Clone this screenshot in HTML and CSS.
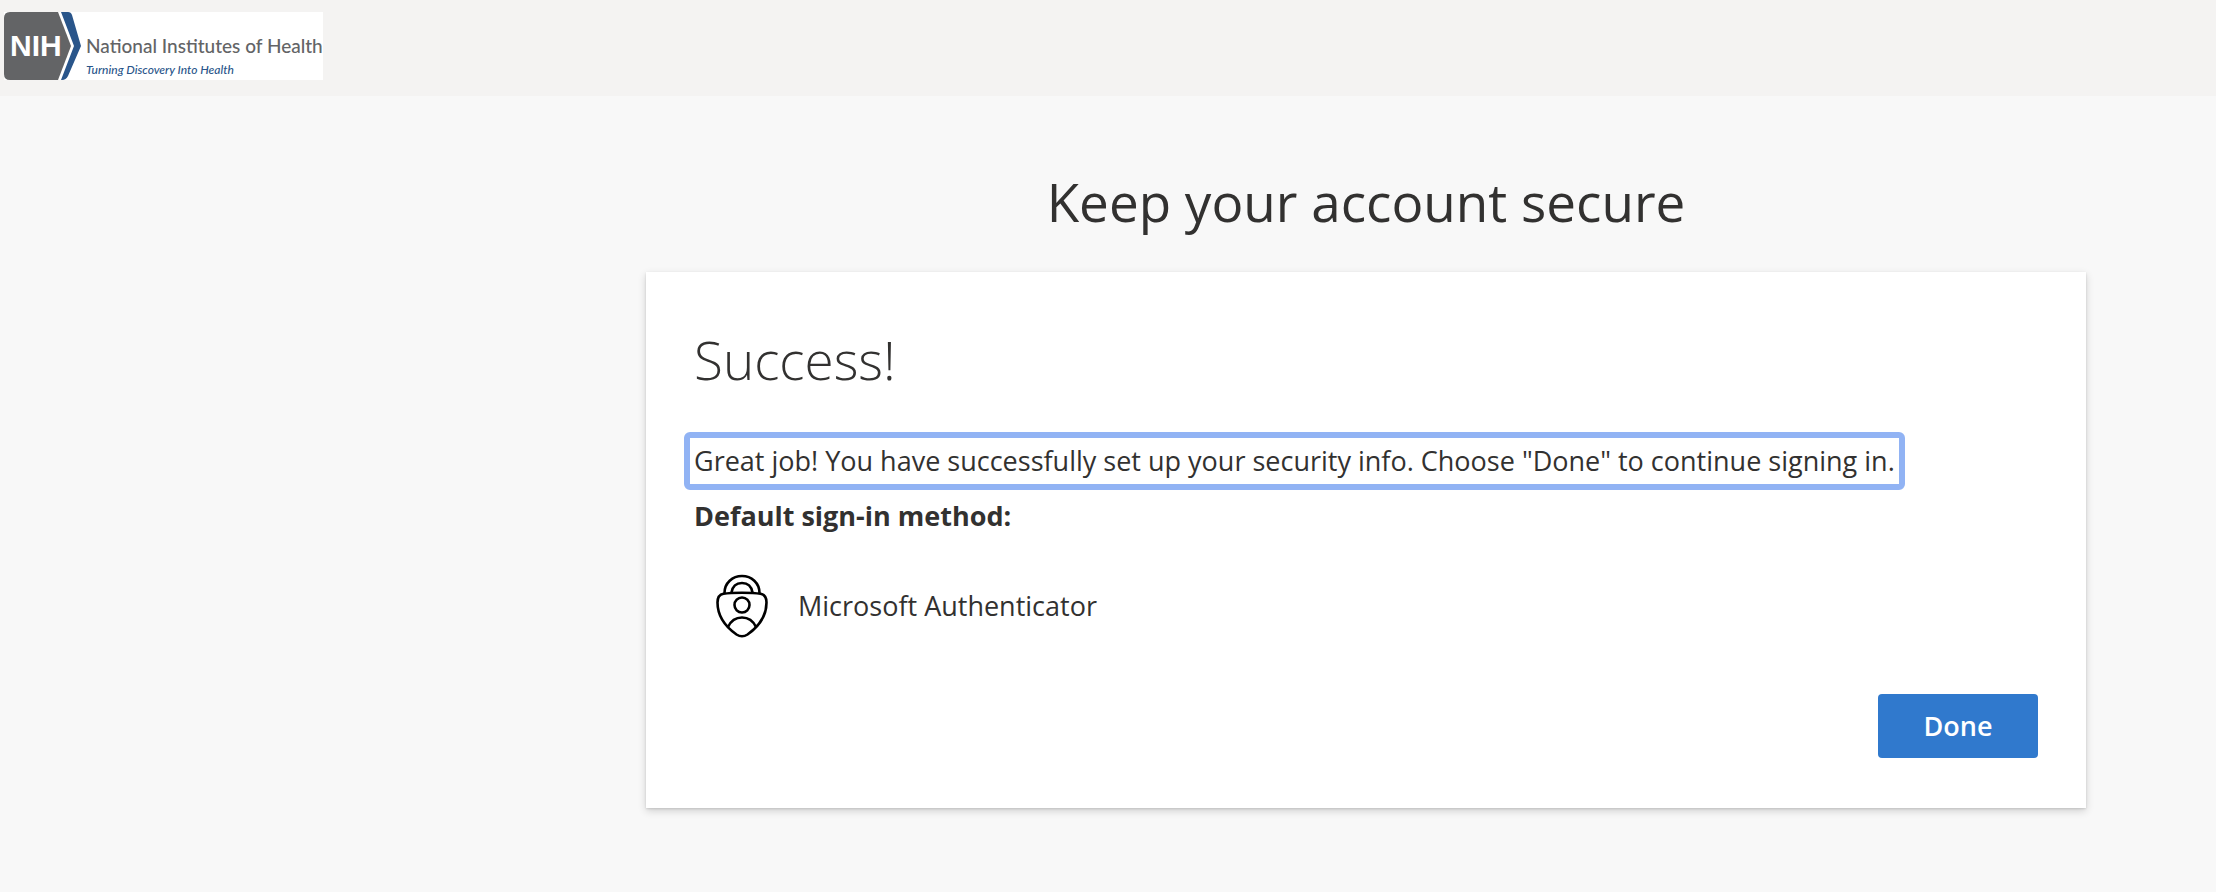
FILE: index.html
```html
<!DOCTYPE html>
<html lang="en">
<head>
<meta charset="utf-8">
<title>Keep your account secure</title>
<link rel="stylesheet" href="styles.css">
</head>
<body>
<header class="topbar">
  <div class="brand">
    <div class="brand-badge">
      <svg class="brand-shape" viewBox="0 0 78 68" aria-hidden="true">
        <path d="M6 0H54L67 34L54 68H6Q0 68 0 62V6Q0 0 6 0Z" fill="#636466"/>
        <path d="M57 0H64Q67 0 68 3L77 34L64 64Q62 68 58 68H57L70 34Z" fill="#29558a"/>
      </svg>
      <span class="brand-code">NIH</span>
    </div>
    <div class="brand-words">
      <span class="brand-name">National Institutes of Health</span>
      <span class="brand-tagline">Turning Discovery Into Health</span>
    </div>
  </div>
</header>
<main class="page">
  <div class="content">
    <h1 class="page-title">Keep your account secure</h1>
    <section class="card">
      <h2 class="card-title">Success!</h2>
      <p class="message" tabindex="-1">Great job! You have successfully set up your security info. Choose "Done" to continue signing in.</p>
      <h3 class="label">Default sign-in method:</h3>
      <div class="method">
        <svg class="method-icon" viewBox="0 0 52 64" fill="none" stroke="#000" stroke-width="2.6" aria-hidden="true">
          <path d="M8.500 19C8.500 9 16.500 2 26 2S43.500 9 43.500 19"/>
          <path d="M15.500 18.500C16.500 12.500 20.500 9 26 9S35.500 12.500 36.500 18.500"/>
          <path d="M26 18.700C18 18.700 12 19 7.500 19.800C3.500 20.500 1.500 24 1.500 28.500C1.500 45 12 54.500 20.500 60.500Q26 64 31.500 60.500C40 54.500 50.500 45 50.500 28.500C50.500 24 48.500 20.500 44.500 19.800C40 19 34 18.700 26 18.700Z"/>
          <circle cx="26" cy="31" r="7.500"/>
          <path d="M12 53C15 46.500 20 43.500 26 43.500S37 46.500 40 53"/>
        </svg>
        <span>Microsoft Authenticator</span>
      </div>
      <div class="actions">
        <button class="done" type="button">Done</button>
      </div>
    </section>
  </div>
</main>
</body>
</html>
```
FILE: styles.css
```css
* {
  box-sizing: border-box;
}

body {
  margin: 0;
  background: #f8f8f8;
  color: #323130;
  font-family: "Open Sans", "Noto Sans", sans-serif;
  font-size: 27px;
  line-height: 40px;
}

h1, h2, h3, p {
  margin: 0;
}

.topbar {
  padding: 12px 4px 16px;
  background: #f4f3f2;
}

.brand {
  display: flex;
  gap: 4px;
  width: fit-content;
  background: #fff;
  font-family: Lato, "Liberation Sans", sans-serif;
  white-space: nowrap;
}

.brand-badge {
  display: grid;
  align-items: center;
}

.brand-shape,
.brand-code {
  grid-area: 1 / 1;
}

.brand-shape {
  width: 78px;
  height: 68px;
}

.brand-code {
  padding-left: 6px;
  color: #fff;
  font-family: "Liberation Sans", sans-serif;
  font-size: 30px;
  font-weight: 700;
}

.brand-words {
  display: flex;
  flex-direction: column;
  justify-content: flex-end;
}

.brand-name {
  color: #636466;
  font-size: 19px;
  font-weight: 500;
  line-height: 28px;
}

.brand-tagline {
  color: #29558a;
  font-size: 12px;
  font-style: italic;
  font-weight: 500;
  line-height: 20px;
}

.page {
  display: flex;
  justify-content: flex-end;
  padding: 68px 130px 40px;
}

.content {
  width: 100%;
  max-width: 1440px;
}

.page-title {
  margin-bottom: 32px;
  font-size: 53px;
  font-weight: 400;
  line-height: 76px;
  text-align: center;
}

.card {
  padding: 48px 48px 50px;
  background: #fff;
  box-shadow: 0 3px 8px rgba(0, 0, 0, 0.16), 0 1px 2px rgba(0, 0, 0, 0.12);
}

.card-title {
  margin-bottom: 32px;
  font-size: 53px;
  font-weight: 300;
  line-height: 80px;
}

.message {
  width: fit-content;
  margin: 0 -10px;
  padding: 4px;
  border: 6px solid #91b3f4;
  border-radius: 6px;
  line-height: 38px;
}

.label {
  margin-top: 6px;
  font-size: 27px;
  font-weight: 700;
  line-height: 40px;
}

.method {
  display: flex;
  align-items: center;
  gap: 30px;
  margin-top: 38px;
  padding-left: 22px;
}

.method-icon {
  width: 52px;
  height: 64px;
}

.actions {
  display: flex;
  justify-content: flex-end;
  margin-top: 56px;
}

.done {
  width: 160px;
  height: 64px;
  padding: 0;
  border: 0;
  border-radius: 4px;
  background: #3079cd;
  color: #fff;
  font: inherit;
  font-weight: 600;
}
```
